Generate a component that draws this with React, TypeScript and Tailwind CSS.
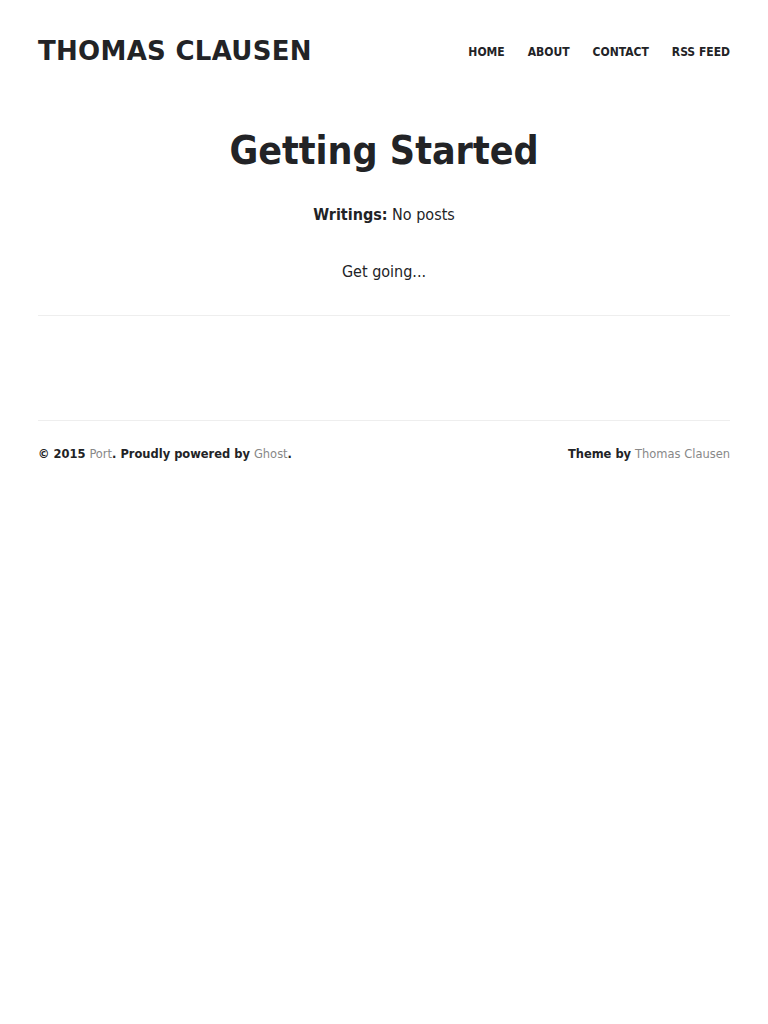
export default function App() {
  return (
    <div className="min-h-screen bg-white text-[#222326]" style={{ fontFamily: '"DejaVu Sans Condensed", "DejaVu Sans", Verdana, sans-serif' }}>
      <div className="mx-[38px]">
        <header className="flex items-center justify-between pt-[35px] h-[66px]">
          <a className="text-[26px] font-bold leading-none tracking-[0.3px]" style={{ fontFamily: '"DejaVu Sans", Verdana, sans-serif' }}>THOMAS CLAUSEN</a>
          <nav className="flex gap-[23px] text-[12px] font-bold pt-[2px]">
            <a>HOME</a>
            <a>ABOUT</a>
            <a>CONTACT</a>
            <a>RSS FEED</a>
          </nav>
        </header>
        <main className="text-center">
          <h1 className="mt-[65px] text-[39px] font-bold leading-none">Getting Started</h1>
          <p className="mt-[33px] text-[16px]"><b>Writings:</b> No posts</p>
          <p className="mt-[33px] text-[16px]">Get going...</p>
          <hr className="mt-[31px] border-t border-[#eeeeee]" />
        </main>
        <footer>
          <hr className="mt-[104px] border-t border-[#eeeeee]" />
          <div className="flex justify-between pt-[23px] text-[12.75px] font-bold">
            <span>© 2015 <a className="text-[#888] font-normal">Port</a>. Proudly powered by <a className="text-[#888] font-normal">Ghost</a>.</span>
            <span>Theme by <a className="text-[#888] font-normal">Thomas Clausen</a></span>
          </div>
        </footer>
      </div>
    </div>
  );
}
